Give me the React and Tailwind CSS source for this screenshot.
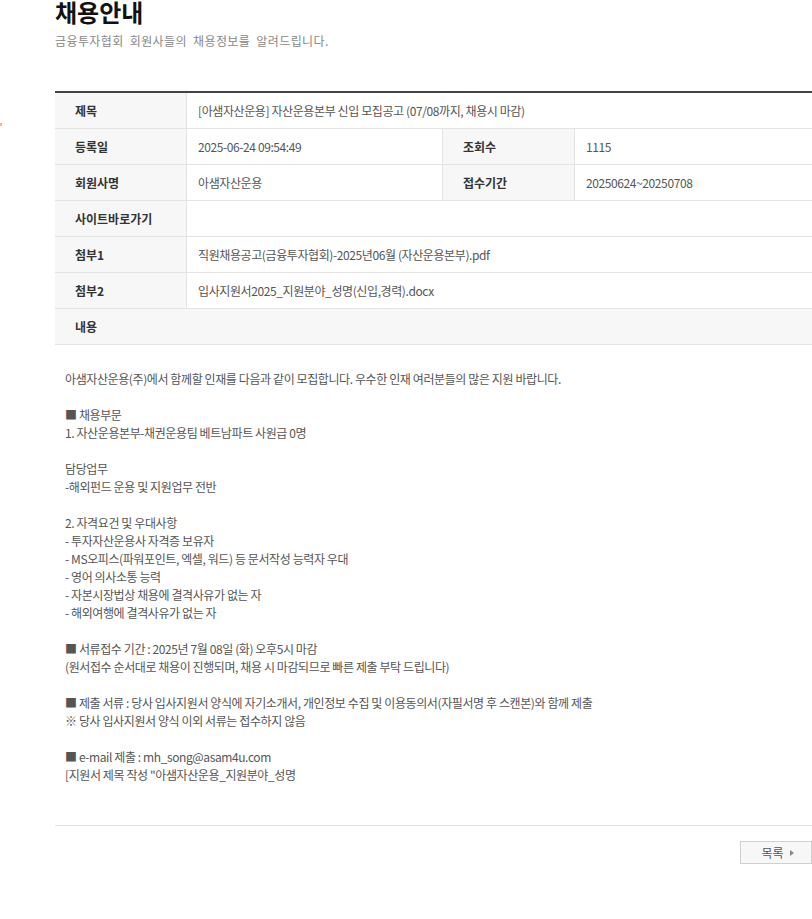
export default function App() {
  const font = { fontFamily: '"Noto Sans CJK KR", "Noto Sans", sans-serif' };
  const lines = [
    "아샘자산운용(주)에서 함께할 인재를 다음과 같이 모집합니다. 우수한 인재 여러분들의 많은 지원 바랍니다.",
    "",
    "■ 채용부문",
    "1. 자산운용본부-채권운용팀 베트남파트 사원급 0명",
    "",
    "담당업무",
    "-해외펀드 운용 및 지원업무 전반",
    "",
    "2. 자격요건 및 우대사항",
    "- 투자자산운용사 자격증 보유자",
    "- MS오피스(파워포인트, 엑셀, 워드) 등 문서작성 능력자 우대",
    "- 영어 의사소통 능력",
    "- 자본시장법상 채용에 결격사유가 없는 자",
    "- 해외여행에 결격사유가 없는 자",
    "",
    "■ 서류접수 기간 : 2025년 7월 08일 (화) 오후5시 마감",
    "(원서접수 순서대로 채용이 진행되며, 채용 시 마감되므로 빠른 제출 부탁 드립니다)",
    "",
    "■ 제출 서류 : 당사 입사지원서 양식에 자기소개서, 개인정보 수집 및 이용동의서(자필서명 후 스캔본)와 함께 제출",
    "※ 당사 입사지원서 양식 이외 서류는 접수하지 않음",
    "",
    "■ e-mail 제출 : mh_song@asam4u.com",
    "[지원서 제목 작성 \"아샘자산운용_지원분야_성명",
  ];
  const th = "w-[132px] shrink-0 bg-[#f7f7f7] pl-[20px] flex items-center font-bold text-[#333] border-r border-[#e3e3e3]";
  const td = "flex-1 pl-[11px] flex items-center text-[#555] tracking-[-0.4px]";
  const tdFixed = "w-[256px] shrink-0 pl-[11px] flex items-center text-[#555] tracking-[-0.4px] border-r border-[#e3e3e3]";
  const row = "flex h-[36px] border-b border-[#e3e3e3]";
  return (
    <div className="bg-white min-h-[919px] w-[812px] overflow-hidden relative" style={font}>
      <div className="absolute left-0 top-[123px] w-[2px] h-[3px] bg-[#f5b48a]" />
      <div className="ml-[55px] w-[757px]">
        <h1 className="text-[24px] font-bold leading-[24px] text-[#111] -mt-[1px] pt-[1px]">채용안내</h1>
        <p className="mt-[9px] text-[12px] leading-[16px] text-[#888] tracking-[0.4px] [word-spacing:3px]">금융투자협회 회원사들의 채용정보를 알려드립니다.</p>
        <div className="mt-[42px] border-t-2 border-[#444] text-[12px]">
          <div className={row}>
            <div className={th}>제목</div>
            <div className={td}>[아샘자산운용] 자산운용본부 신입 모집공고 (07/08까지, 채용시 마감)</div>
          </div>
          <div className={row}>
            <div className={th}>등록일</div>
            <div className={tdFixed}>2025-06-24 09:54:49</div>
            <div className={th}>조회수</div>
            <div className={td}>1115</div>
          </div>
          <div className={row}>
            <div className={th}>회원사명</div>
            <div className={tdFixed}>아샘자산운용</div>
            <div className={th}>접수기간</div>
            <div className={td}>20250624~20250708</div>
          </div>
          <div className={row}>
            <div className={th}>사이트바로가기</div>
            <div className={td}></div>
          </div>
          <div className={row}>
            <div className={th}>첨부1</div>
            <div className={td}>직원채용공고(금융투자협회)-2025년06월 (자산운용본부).pdf</div>
          </div>
          <div className={row}>
            <div className={th}>첨부2</div>
            <div className={td}>입사지원서2025_지원분야_성명(신입,경력).docx</div>
          </div>
          <div className={row + " bg-[#f7f7f7]"}>
            <div className="pl-[20px] flex items-center font-bold text-[#333]">내용</div>
          </div>
          <div className="pl-[10px] pt-[25px] pb-[41px] border-b border-[#e3e3e3] text-[#555] leading-[18px] tracking-[-0.4px]">
            {lines.map((l, i) => (
              <div key={i} className="h-[18px] whitespace-nowrap">{l}</div>
            ))}
          </div>
        </div>
        <div className="flex justify-end mt-[15px]">
          <button className="w-[72px] h-[23px] border border-[#d0d0d0] bg-[#f7f7f7] text-[12px] text-[#555] flex items-center justify-center gap-[6px] pl-[3px]">
            <span>목록</span>
            <svg width="4" height="6" viewBox="0 0 4 6"><path d="M0 0 L4 3 L0 6 Z" fill="#888" /></svg>
          </button>
        </div>
      </div>
    </div>
  );
}
